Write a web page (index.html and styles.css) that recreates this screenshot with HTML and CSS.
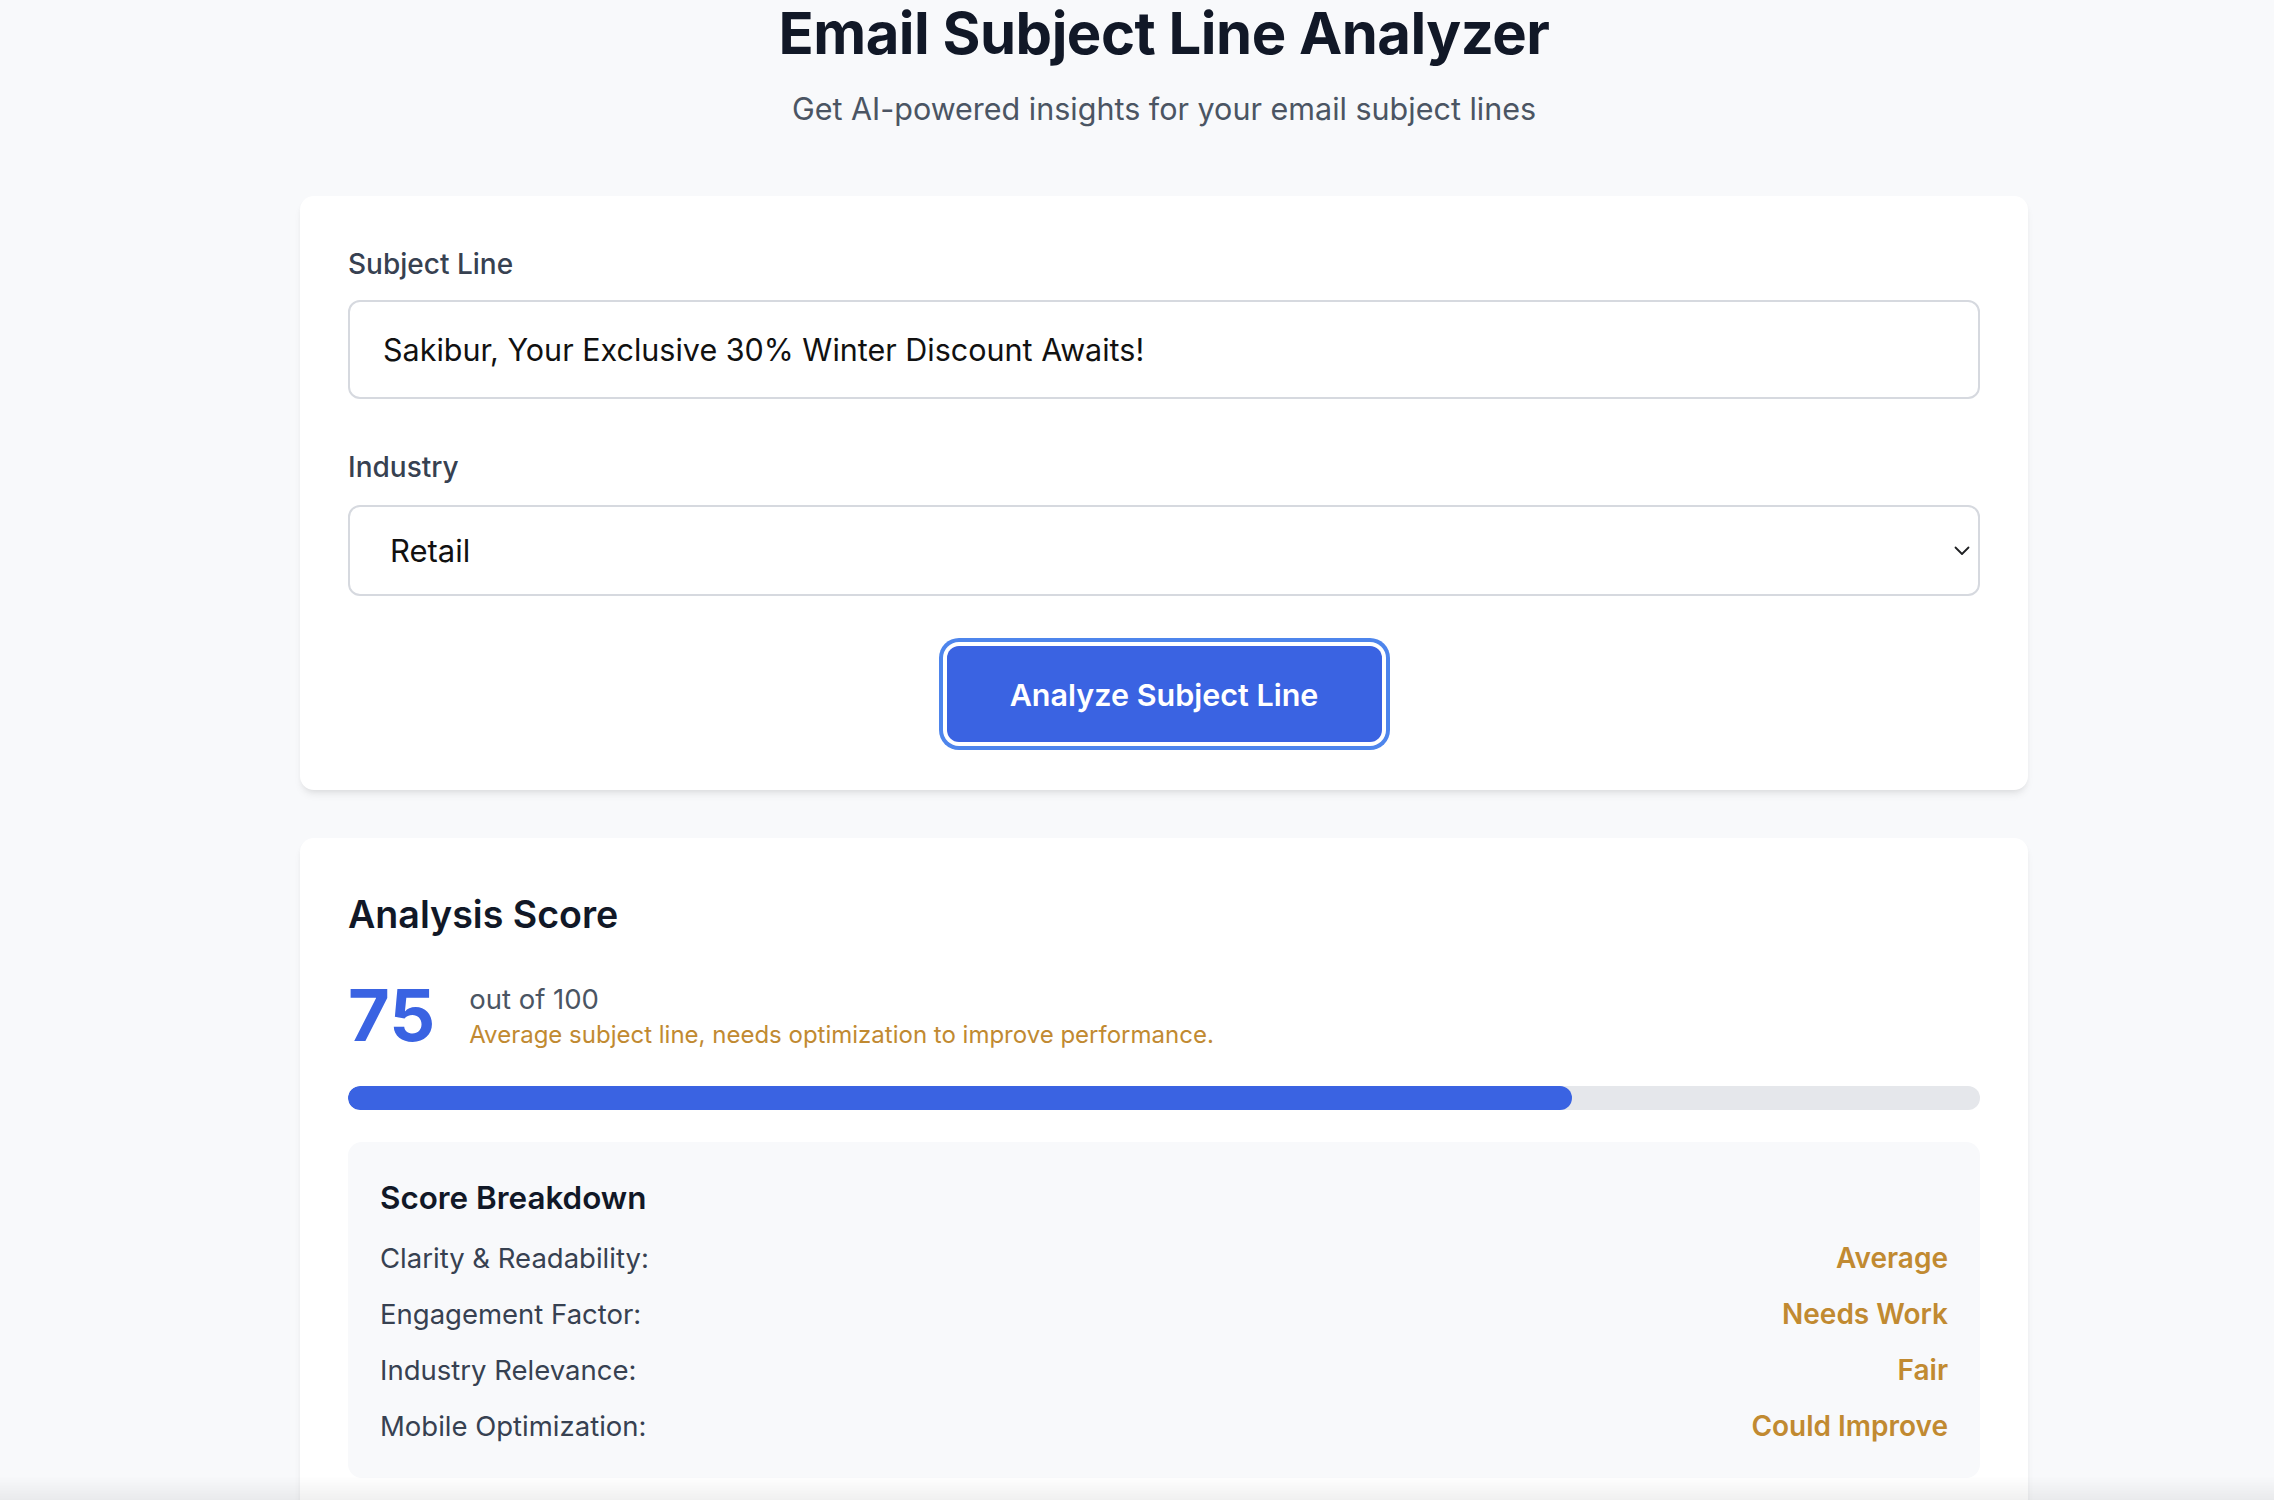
FILE: index.html
```html
<!DOCTYPE html>
<html lang="en">
<head>
<meta charset="utf-8">
<title>Email Subject Line Analyzer</title>
<link rel="stylesheet" href="styles.css">
</head>
<body>
<main class="page">
  <header class="hero">
    <h1 class="title">Email Subject Line Analyzer</h1>
    <p class="subtitle">Get AI-powered insights for your email subject lines</p>
  </header>

  <section class="card form-card">
    <label class="label" for="subject">Subject Line</label>
    <input id="subject" class="text-input" type="text" value="Sakibur, Your Exclusive 30% Winter Discount Awaits!">

    <label class="label label-industry" for="industry">Industry</label>
    <div class="select-wrap">
      <select id="industry" class="select">
        <option>Retail</option>
      </select>
      <svg class="chevron" width="16" height="10" viewBox="0 0 16 10" aria-hidden="true"><path d="M1.5 1.5 L8 8 L14.5 1.5" fill="none" stroke="#1f2023" stroke-width="1.8" stroke-linecap="round" stroke-linejoin="round"/></svg>
    </div>

    <div class="actions">
      <button class="btn" type="button">Analyze Subject Line</button>
    </div>
  </section>

  <section class="card result-card">
    <h2 class="section-title">Analysis Score</h2>
    <div class="score-row">
      <div class="score">75</div>
      <div class="score-text">
        <div class="out-of">out of 100</div>
        <div class="verdict">Average subject line, needs optimization to improve performance.</div>
      </div>
    </div>
    <div class="bar"><div class="bar-fill" style="width:75%"></div></div>

    <div class="breakdown">
      <h3 class="breakdown-title">Score Breakdown</h3>
      <div class="row"><span class="row-label">Clarity &amp; Readability:</span><span class="row-value">Average</span></div>
      <div class="row"><span class="row-label">Engagement Factor:</span><span class="row-value">Needs Work</span></div>
      <div class="row"><span class="row-label">Industry Relevance:</span><span class="row-value">Fair</span></div>
      <div class="row"><span class="row-label">Mobile Optimization:</span><span class="row-value">Could Improve</span></div>
    </div>
  </section>
</main>
<div class="bottom-fade"></div>
</body>
</html>
```

FILE: styles.css
```css
* { box-sizing: border-box; }

html, body {
  margin: 0;
  padding: 0;
  background: #f8f9fb;
  font-family: Inter, "Noto Sans", "Liberation Sans", sans-serif;
  color: #111827;
  overflow: hidden;
}

.page {
  width: 1728px;
  margin-left: 300px;
}

.hero {
  text-align: center;
  margin-bottom: 66px;
}

.title {
  margin: 0;
  padding-top: 3px;
  font-size: 58px;
  line-height: 60px;
  font-weight: 700;
  color: #111827;
  letter-spacing: -0.5px;
}

.subtitle {
  margin: 25px 0 0;
  font-size: 30.5px;
  line-height: 42px;
  color: #4b5563;
}

.card {
  background: #fff;
  border-radius: 14px;
  box-shadow: 0 6px 9px -2px rgba(0, 0, 0, 0.08), 0 3px 6px -3px rgba(0, 0, 0, 0.08);
  padding: 48px;
}

.form-card {
  display: flex;
  flex-direction: column;
}

.label {
  display: block;
  font-size: 28px;
  line-height: 40px;
  font-weight: 500;
  color: #374151;
  margin-bottom: 16px;
}

.label-industry {
  margin-top: 48px;
  margin-bottom: 18px;
}

.text-input {
  display: block;
  width: 100%;
  height: 99px;
  border: 2px solid #d6d9df;
  border-radius: 12px;
  padding: 0 33px;
  font-family: Inter, "Noto Sans", sans-serif;
  font-size: 30.5px;
  color: #111;
  background: #fff;
  outline: none;
}

.select-wrap {
  position: relative;
}

.select {
  display: block;
  width: 100%;
  height: 91px;
  border: 2px solid #d6d9df;
  border-radius: 12px;
  padding: 0 40px;
  font-family: Inter, "Noto Sans", sans-serif;
  font-size: 31px;
  color: #111;
  background: #fff;
  appearance: none;
  -webkit-appearance: none;
  outline: none;
}

.chevron {
  position: absolute;
  right: 10px;
  top: 41px;
}

.actions {
  display: flex;
  justify-content: center;
  margin-top: 50px;
}

.btn {
  width: 435px;
  height: 96px;
  border: none;
  border-radius: 12px;
  background: #3a63e2;
  color: #fff;
  font-family: Inter, "Noto Sans", sans-serif;
  font-size: 30.5px;
  font-weight: 600;
  box-shadow: 0 0 0 4px #fff, 0 0 0 8px #4e85ec;
}

.result-card {
  margin-top: 48px;
}

.section-title {
  margin: 0;
  font-size: 37.6px;
  line-height: 58px;
  font-weight: 600;
  color: #111827;
}

.score-row {
  display: flex;
  align-items: center;
  gap: 34px;
  margin-top: 35px;
}

.score {
  font-size: 72px;
  line-height: 72px;
  font-weight: 700;
  color: #3a63e2;
}

.out-of {
  font-size: 27.5px;
  line-height: 40px;
  color: #4b5563;
}

.verdict {
  font-size: 24px;
  line-height: 32px;
  color: #c18a31;
}

.bar {
  margin-top: 35px;
  height: 24px;
  background: #e5e7eb;
  border-radius: 12px;
  overflow: hidden;
}

.bar-fill {
  height: 100%;
  background: #3a63e2;
  border-radius: 12px;
}

.breakdown {
  margin-top: 32px;
  background: #f8f9fb;
  border-radius: 14px;
  padding: 32px;
  display: flex;
  flex-direction: column;
  gap: 16px;
}

.breakdown-title {
  margin: 0;
  font-size: 31.4px;
  line-height: 48px;
  font-weight: 600;
  color: #111827;
}

.row {
  display: flex;
  justify-content: space-between;
  font-size: 27.5px;
  line-height: 40px;
}

.row-label {
  color: #374151;
}

.row-value {
  color: #c18a31;
  font-weight: 600;
  font-size: 28px;
}

.bottom-fade {
  position: fixed;
  left: 0;
  right: 0;
  bottom: 0;
  height: 24px;
  background: linear-gradient(to bottom, rgba(0, 0, 0, 0), rgba(0, 0, 0, 0.06));
  pointer-events: none;
}
```
